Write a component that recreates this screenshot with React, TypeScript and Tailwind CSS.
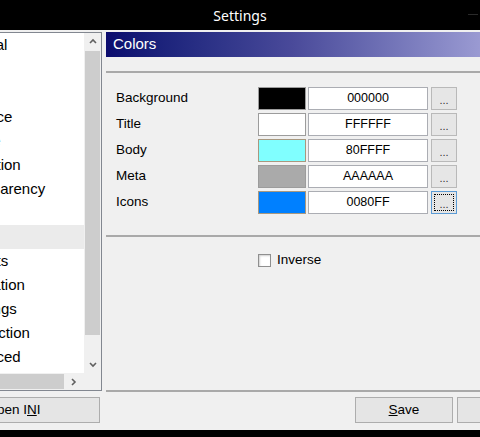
import React from "react"

const items = [
  "General",
  "Font",
  "Layout",
  "Interface",
  "Theme",
  "Animation",
  "Transparency",
  "Menu",
  "Colors",
  "Widgets",
  "Navigation",
  "Warnings",
  "Connection",
  "Advanced",
]

const colorRows = [
  { label: "Background", color: "#000000", value: "000000", edge: "border-[#9c9c9c]" },
  { label: "Title", color: "#ffffff", value: "FFFFFF", edge: "border-[#9c9c9c]" },
  { label: "Body", color: "#80ffff", value: "80FFFF", edge: "border-[#a8987f]" },
  { label: "Meta", color: "#aaaaaa", value: "AAAAAA", edge: "border-[#9c9c9c]" },
  { label: "Icons", color: "#0080ff", value: "0080FF", edge: "border-[#a8987f]" },
]

function Chevron({ dir }: { dir: "up" | "down" | "right" }) {
  const d =
    dir === "up" ? "M1 5 L4 2 L7 5" : dir === "down" ? "M1 2 L4 5 L7 2" : "M2 1 L5 4 L2 7"
  return (
    <svg width="8" height="8" viewBox="0 0 8 8" fill="none">
      <path d={d} stroke="#606060" strokeWidth="1.6" />
    </svg>
  )
}

export default function App() {
  return (
    <div className="w-[480px] h-[437px] overflow-hidden bg-black font-['Liberation_Sans',Arial,sans-serif] text-[13.5px] text-black">
      {/* Title bar */}
      <div className="relative h-[30px] flex items-center justify-center">
        <span className="text-white text-[14px] font-['Noto_Sans',sans-serif]">Settings</span>
        <div className="absolute right-[2px] top-[14px] w-[10px] h-[1px] bg-[#2a2a2a]" />
      </div>

      <div className="h-[400px] bg-[#f0f0f0] flex">
        {/* Left: list of sections */}
        <div className="w-[102px] shrink-0 flex flex-col pt-[2px] pb-[7px] overflow-hidden">
          <div className="h-[359px] bg-white border-y border-r border-[#828790] flex flex-col">
            <div className="h-[340px] flex">
              <div className="flex-1 overflow-hidden text-[15px]">
                {items.map((it) => (
                  <div
                    key={it}
                    className={`h-[24px] flex items-center whitespace-nowrap ${it === "Colors" ? "bg-[#ebebeb]" : ""}`}
                  >
                    <span className="ml-[-46px]">{it}</span>
                  </div>
                ))}
              </div>
              <div className="w-[17px] bg-[#f0f0f0] flex flex-col">
                <div className="h-[17px] flex items-center justify-center">
                  <Chevron dir="up" />
                </div>
                <div className="mt-[1px] mx-[1px] h-[284px] bg-[#cdcdcd]" />
                <div className="flex-1" />
                <div className="h-[17px] flex items-center justify-center">
                  <Chevron dir="down" />
                </div>
              </div>
            </div>
            <div className="h-[17px] flex">
              <div className="flex-1 bg-[#f0f0f0] flex items-center">
                <div className="w-[64px] h-[15px] bg-[#cdcdcd]" />
                <div className="flex-1 flex items-center justify-center">
                  <Chevron dir="right" />
                </div>
              </div>
              <div className="w-[17px] bg-[#f0f0f0]" />
            </div>
          </div>
          <button className="mt-[6px] h-[26px] -ml-[73px] w-[173px] shrink-0 bg-[#e5e5e5] border border-[#adadad] flex items-center justify-center">
            Open I<span className="underline">N</span>I
          </button>
        </div>

        {/* Right: section panel */}
        <div className="ml-[4px] w-[374px] flex flex-col pt-[2px] pb-[7px] overflow-hidden">
          <div className="h-[25px] bg-gradient-to-r from-[#0c0c6e] via-[#4a4a9a] to-[#9a9ad2] text-white text-[15px] flex items-center pl-[7px]">
            Colors
          </div>
          <div className="flex-1 flex flex-col">
            <div className="mt-[14px] h-[2px] bg-[#a9a9a9]" />
            <div className="mt-[14px] pl-[10px] flex flex-col gap-[3px]">
              {colorRows.map((r, i) => (
                <div key={r.label} className="h-[23px] flex items-center">
                  <div className="w-[142px]">{r.label}</div>
                  <div className={`w-[48px] h-[23px] border ${r.edge}`} style={{ backgroundColor: r.color }} />
                  <div className="ml-[2px] w-[120px] h-[23px] bg-white border border-[#abadb3] flex items-center justify-center text-[12.5px]">
                    {r.value}
                  </div>
                  <div
                    className={`ml-[3px] w-[26px] h-[23px] flex items-center justify-center text-[11px] text-[#333] ${
                      i === 4 ? "border border-[#5b9bd5] bg-[#e5e5e5] p-[2px]" : "border border-[#b9b9b9] bg-[#e6e6e6]"
                    }`}
                  >
                    {i === 4 ? (
                      <div className="w-full h-full border border-dotted border-black flex items-center justify-center pt-[4px]">
                        ...
                      </div>
                    ) : (
                      <span className="pt-[4px]">...</span>
                    )}
                  </div>
                </div>
              ))}
            </div>
            <div className="mt-[21px] h-[2px] bg-[#a9a9a9]" />
            <div className="mt-[13px] pl-[152px] flex items-center">
              <div className="w-[13px] h-[13px] border border-[#8f8f8f] bg-white shadow-[inset_1px_1px_2px_#d0d0d0]" />
              <span className="ml-[6px]">Inverse</span>
            </div>
            <div className="flex-1" />
            <div className="h-[2px] bg-[#a9a9a9]" />
          </div>
          <div className="mt-[5px] h-[26px] flex">
            <button className="ml-[249px] w-[98px] shrink-0 bg-[#e5e5e5] border border-[#adadad] flex items-center justify-center">
              <span className="underline">S</span>ave
            </button>
            <button className="ml-[4px] w-[98px] shrink-0 bg-[#e5e5e5] border border-[#adadad] flex items-center justify-center">
              Cancel
            </button>
          </div>
        </div>
      </div>
    </div>
  )
}
